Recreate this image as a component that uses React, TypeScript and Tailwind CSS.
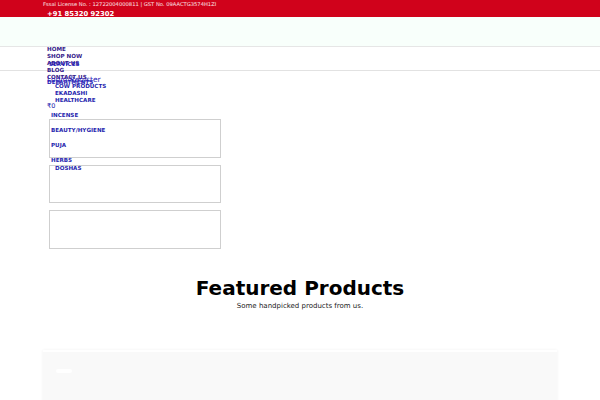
import React from "react"

const font = { fontFamily: '"DejaVu Sans", sans-serif' }

const navItems = ["HOME", "SHOP NOW", "ABOUT US", "BLOG", "CONTACT US"]

export default function App() {
  return (
    <div className="relative w-[600px] h-[400px] overflow-hidden bg-white" style={font}>
      {/* top strip */}
      <div className="h-[17px] bg-[#d0021b] px-[43px] pt-[1px]">
        <p className="text-[5.2px] leading-[7px] text-white/90">
          Fssai License No. : 12722004000811 | GST No. 09AACTG3574H1ZI
        </p>
      </div>
      <p className="absolute left-[47px] top-[10px] text-[6.8px] leading-[9px] font-semibold text-white">
        +91 85320 92302
      </p>

      {/* header bands */}
      <div className="h-[30px] bg-[#f8fffb] border-b border-[#e6e6e6]" />
      <div className="h-[24px] bg-white border-b border-[#e2e2e2]" />

      {/* main nav (overflowing) */}
      <ul className="absolute left-[47px] top-[45.5px] flex flex-col text-[5.6px] leading-[7px] font-bold text-[#35208a]">
        {navItems.map((n) => (
          <li key={n}>{n}</li>
        ))}
      </ul>
      <span className="absolute left-[49px] top-[61px] text-[5.6px] leading-[7px] font-bold text-[#2a24b8]">
        SERVICES
      </span>
      <span className="absolute left-[47px] top-[75px] text-[7.5px] leading-[9px] text-[#2a24b8]">
        Login/Register
      </span>
      <span className="absolute left-[47px] top-[79px] text-[5.6px] leading-[7px] font-bold text-[#2a24b8]">
        DEPARTMENTS
      </span>

      {/* department list */}
      <ul className="absolute left-[55px] top-[82.5px] flex flex-col text-[5.6px] leading-[7px] font-bold text-[#1f1fae]">
        <li>COW PRODUCTS</li>
        <li>EKADASHI</li>
        <li>HEALTHCARE</li>
      </ul>
      <span className="absolute left-[47px] top-[102px] text-[6.5px] leading-[8px] text-[#1f1fae]">₹0</span>

      {/* boxes column */}
      <div className="absolute left-[49px] top-[111px] w-[172px] flex flex-col">
        <span className="pl-[2px] text-[5.6px] leading-[8px] font-bold text-[#1f1fae]">INCENSE</span>
        <div className="h-[39px] border border-[#cfcfcf]" />
        <div className="h-[7px]" />
        <div className="h-[38px] border border-[#cfcfcf]" />
        <div className="h-[7px]" />
        <div className="h-[39px] border border-[#cfcfcf]" />
      </div>
      <ul className="absolute left-[51px] top-[126.5px] flex flex-col gap-[8px] text-[5.6px] leading-[7px] font-bold text-[#1f1fae]">
        <li>BEAUTY/HYGIENE</li>
        <li>PUJA</li>
        <li>HERBS</li>
      </ul>
      <span className="absolute left-[55px] top-[164.5px] text-[5.6px] leading-[7px] font-bold text-[#1f1fae]">
        DOSHAS
      </span>

      {/* featured */}
      <div className="absolute left-0 right-0 top-[276px] flex flex-col items-center text-black">
        <h2 className="text-[20px] leading-[24px] font-bold">Featured Products</h2>
        <p className="mt-[1px] text-[7px] leading-[10px] text-[#222]">Some handpicked products from us.</p>
      </div>

      {/* product area */}
      <div className="absolute left-[43px] right-[43px] top-[350px] h-[60px] bg-[#f9f9f9] border-t-2 border-white shadow-[0_0_3px_rgba(0,0,0,0.06)]">
        <div className="ml-[13px] mt-[17px] w-[16px] h-[4px] rounded-full bg-white" />
      </div>
    </div>
  )
}
